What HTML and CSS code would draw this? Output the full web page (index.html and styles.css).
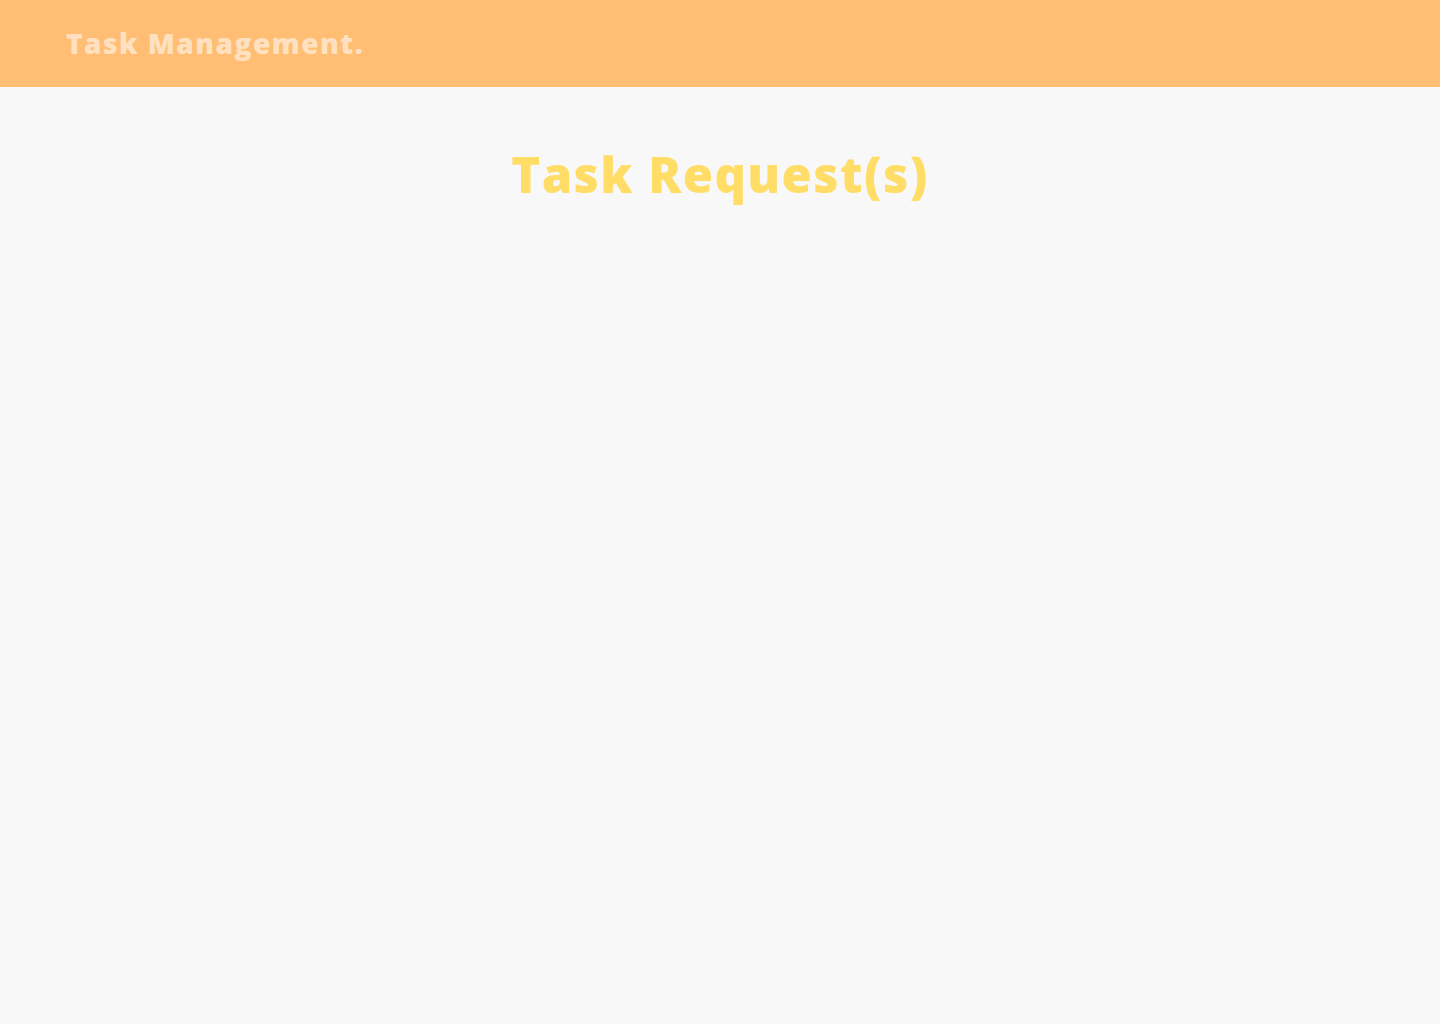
FILE: index.html
```html
<!DOCTYPE html>
<html lang="en">
<head>
<meta charset="utf-8">
<title>Task Management</title>
<link rel="stylesheet" href="styles.css">
</head>
<body>
<header class="topbar">
  <div class="brand">Task Management.</div>
</header>
<main class="content">
  <h1 class="page-title">Task Request(s)</h1>
</main>
</body>
</html>
```

FILE: styles.css
```css
* { box-sizing: border-box; }
html, body { margin: 0; padding: 0; }
body {
  background: #f8f8f8;
  font-family: "Open Sans", "Noto Sans", sans-serif;
  min-height: 1024px;
}
.topbar {
  height: 87px;
  background: #ffbe73;
  display: flex;
  align-items: center;
  padding: 0 66px;
}
.brand {
  color: #ffe1c2;
  font-weight: 800;
  font-size: 28px;
  line-height: 1;
  letter-spacing: 1.5px;
  margin-top: -2px;
}
.content {
  display: flex;
  justify-content: center;
  padding-top: 63px;
}
.page-title {
  margin: 0;
  color: #ffdd66;
  font-weight: 800;
  font-size: 49px;
  line-height: 1;
  letter-spacing: 1.4px;
}
```
